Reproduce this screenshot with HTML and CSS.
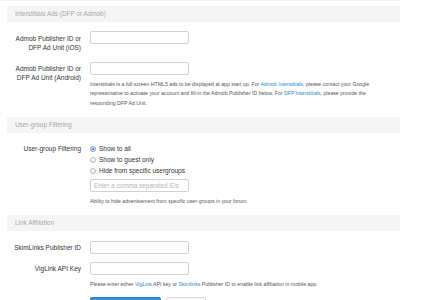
FILE: index.html
```html
<!DOCTYPE html>
<html>
<head>
<meta charset="utf-8">
<link rel="stylesheet" href="styles.css">
</head>
<body>
<div class="page">
  <div class="head">Interstitials Ads (DFP or Admob)</div>

  <div class="row r1">
    <div class="label">Admob Publisher ID or<br>DFP Ad Unit (iOS)</div>
    <div class="ctrl"><div class="input"></div></div>
  </div>

  <div class="row r2">
    <div class="label">Admob Publisher ID or<br>DFP Ad Unit (Android)</div>
    <div class="ctrl">
      <div class="input"></div>
      <div class="help">Interstitials is a full screen HTML5 ads to be displayed at app start up. For <a class="link">Admob Interstitials</a>, please contact your Google<br>representative to activate your account and fill-in the Admob Publisher ID below. For <a class="link">DFP Interstitials</a>, please provide the<br>responding DFP Ad Unit.</div>
    </div>
  </div>

  <div class="head h2">User-group Filtering</div>

  <div class="row r3">
    <div class="label lradio">User-group Filtering</div>
    <div class="ctrl">
      <div class="radio"><span class="dot on"></span>Show to all</div>
      <div class="radio"><span class="dot"></span>Show to guest only</div>
      <div class="radio"><span class="dot"></span>Hide from specific usergroups</div>
      <div class="input ph">Enter a comma separated IDs</div>
      <div class="help">Ability to hide advertisement from specific user-groups in your forum.</div>
    </div>
  </div>

  <div class="head h3">Link Affiliation</div>

  <div class="row r5">
    <div class="label">SkimLinks Publisher ID</div>
    <div class="ctrl"><div class="input"></div></div>
  </div>

  <div class="row r6">
    <div class="label">VigLink API Key</div>
    <div class="ctrl">
      <div class="input"></div>
      <div class="help">Please enter either <a class="link">VigLink</a> API key or <a class="link">Skimlinks</a> Publisher ID to enable link affiliation in mobile app.</div>
      <div class="buttons">
        <div class="btn primary"></div>
        <div class="btn"></div>
      </div>
    </div>
  </div>
</div>
</body>
</html>
```
FILE: styles.css
```css
body {
  margin: 0;
  font-family: "Liberation Sans", Arial, sans-serif;
  color: #333;
  background: #fff;
  overflow: hidden;
}
.page {
  border-top: 1px solid #f2f2f2;
  padding: 5px 0 0 7px;
  width: 393px;
}
.head {
  height: 16px;
  line-height: 16px;
  background: #f5f5f5;
  color: #a8a8a8;
  font-size: 6.4px;
  padding-left: 8px;
  border-radius: 1px;
}
.h2 { margin-top: 8.25px; }
.h3 { margin-top: 8.25px; }
.row {
  display: grid;
  grid-template-columns: 74px 1fr;
  column-gap: 9px;
}
.r1 { margin-top: 9px; }
.r2 { margin-top: 10px; }
.r3 { margin-top: 10.5px; }
.r5 { margin-top: 10px; }
.r6 { margin-top: 8px; }
.label {
  text-align: right;
  font-size: 6.5px;
  line-height: 9px;
  padding-top: 2.5px;
  color: #333;
  white-space: nowrap;
}
.lradio {
  padding-top: 0;
  line-height: 11px;
}
.input {
  width: 99px;
  height: 13px;
  box-sizing: border-box;
  border: 1px solid #d0d0d0;
  border-radius: 2px;
  background: #fff;
}
.ph {
  margin-top: 2.5px;
  font-size: 6.4px;
  line-height: 11px;
  color: #b5b5b5;
  padding-left: 3px;
  white-space: nowrap;
}
.help {
  font-size: 5.2px;
  line-height: 9.5px;
  color: #555;
  margin-top: 5.25px;
  white-space: nowrap;
}
.link {
  color: #2a88c8;
}
.radio {
  display: flex;
  align-items: center;
  height: 11px;
  font-size: 6.5px;
  color: #333;
  white-space: nowrap;
}
.dot {
  width: 6px;
  height: 6px;
  box-sizing: border-box;
  border: 1px solid #b8b8b8;
  border-radius: 50%;
  background: linear-gradient(#fff, #ececec);
  margin-right: 3px;
  position: relative;
}
.dot.on {
  border-color: #7da6d3;
  background: linear-gradient(#eaf2fb, #c9dcf1);
}
.dot.on::after {
  content: "";
  position: absolute;
  left: 1px;
  top: 1px;
  width: 2px;
  height: 2px;
  border-radius: 50%;
  background: #3b6fb0;
}
.buttons {
  display: flex;
  gap: 5px;
  margin-top: 7.25px;
}
.btn {
  width: 40px;
  height: 14px;
  box-sizing: border-box;
  border: 1px solid #d6d6d6;
  border-radius: 2px;
  background: #fafafa;
}
.btn.primary {
  width: 71px;
  border-color: #2a7fc0;
  background: #3a92d6;
}
```
